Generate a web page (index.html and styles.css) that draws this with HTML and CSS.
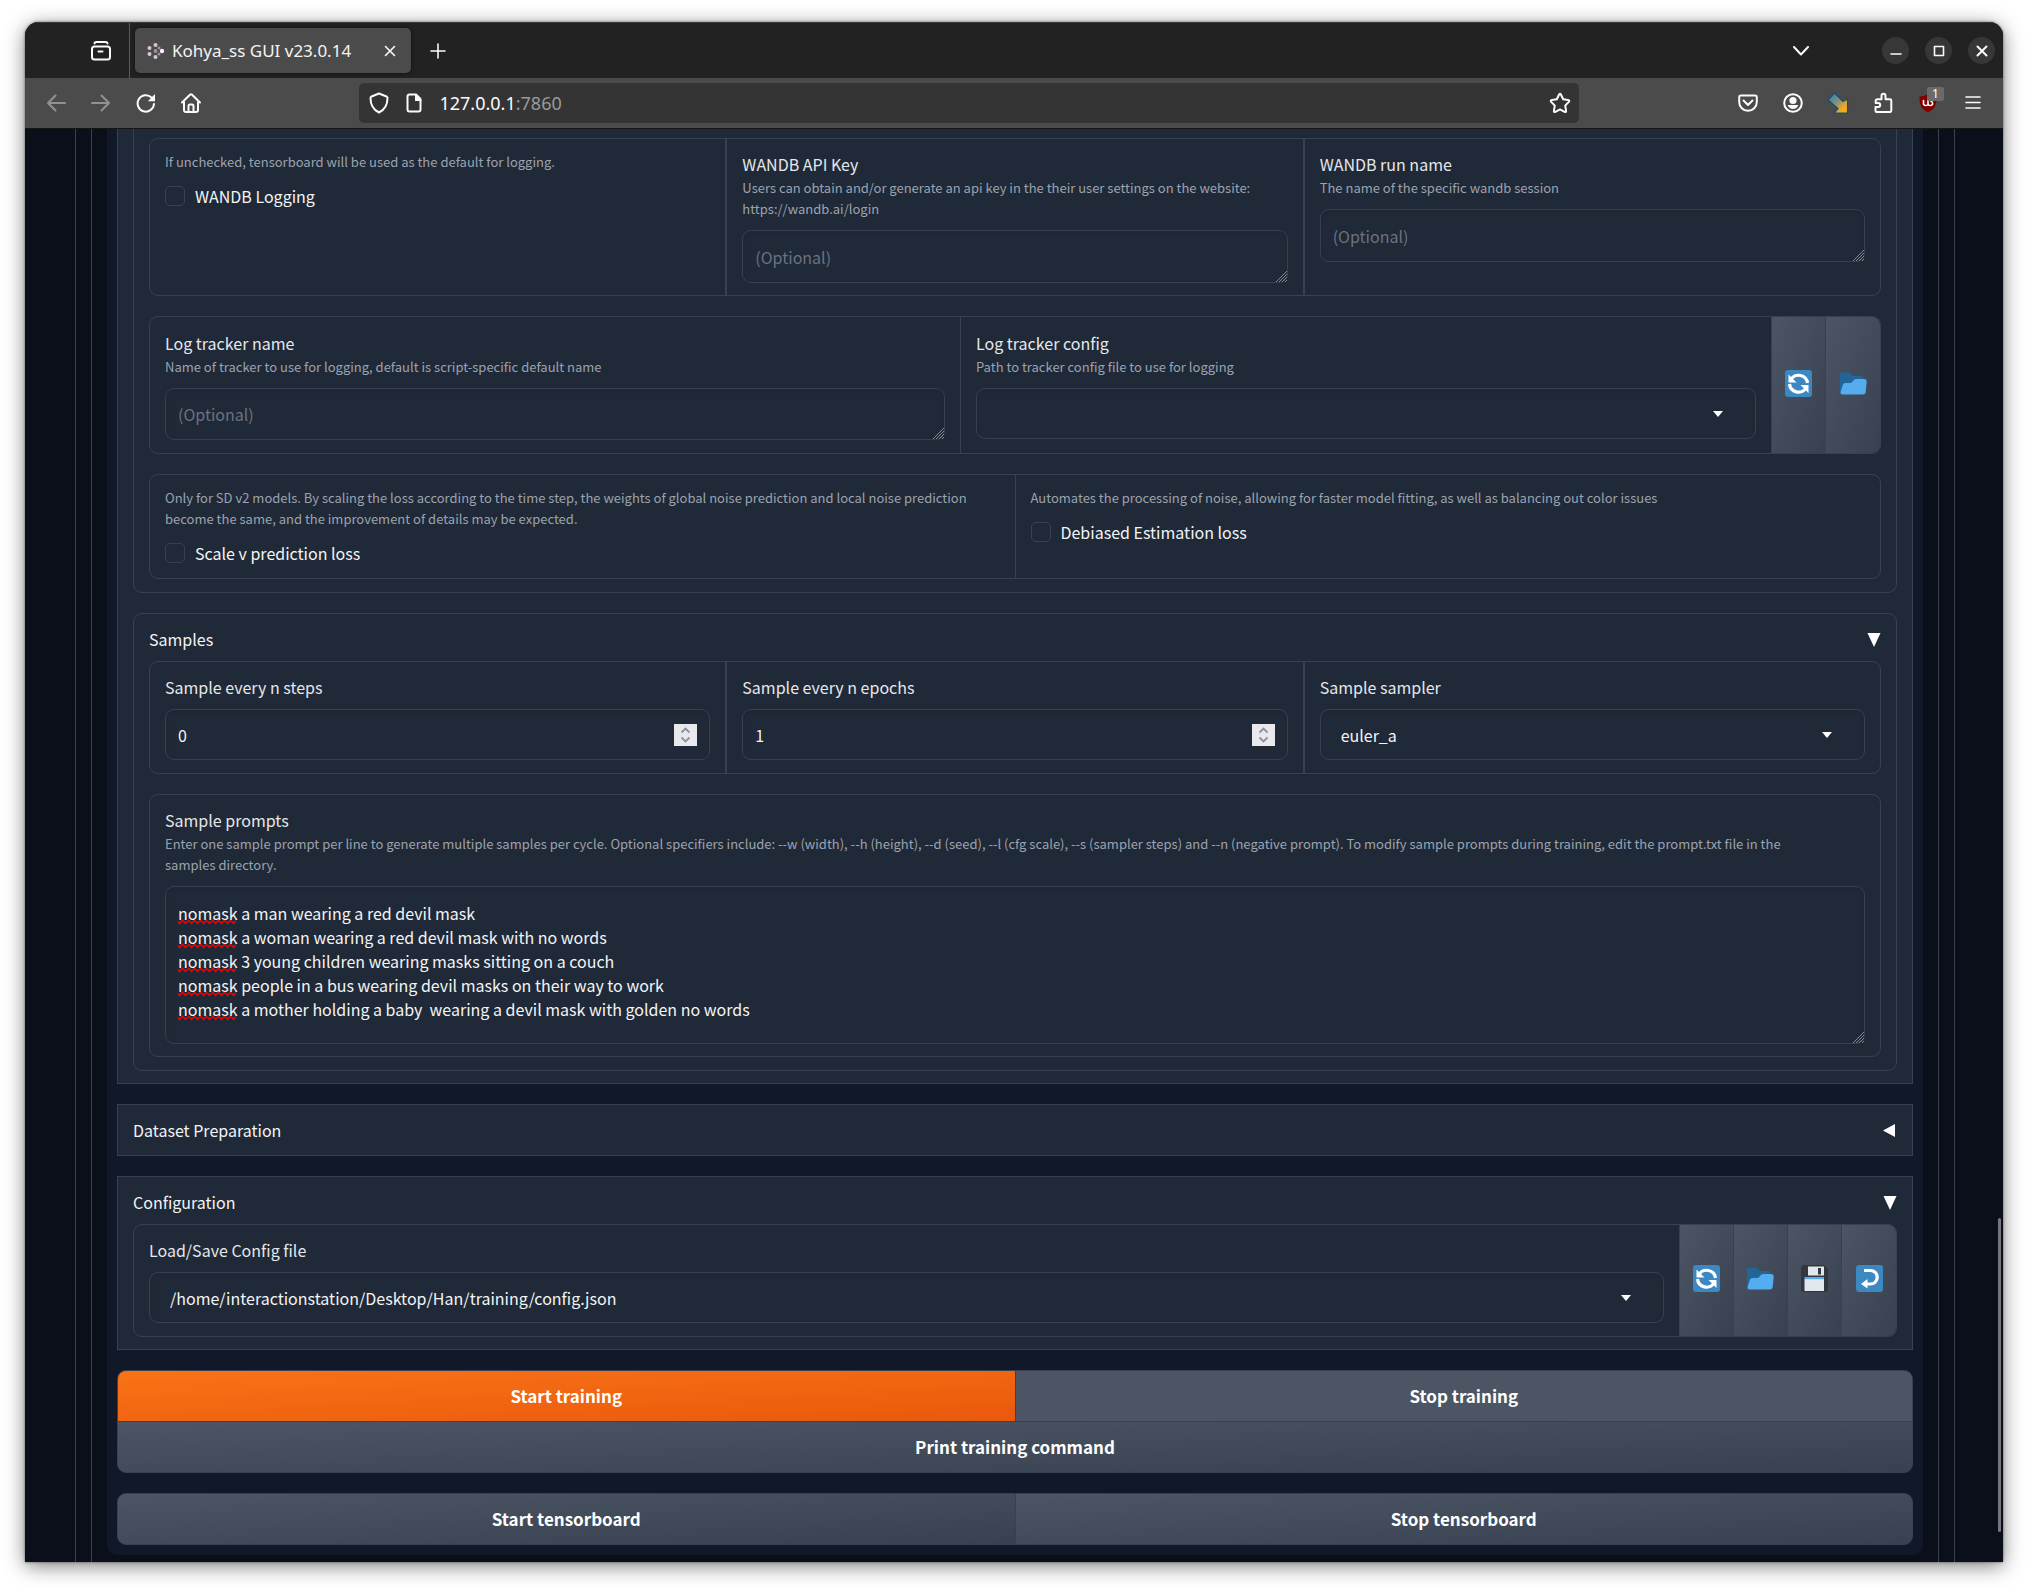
FILE: index.html
```html
<!DOCTYPE html>
<html lang="en">
<head>
<meta charset="utf-8">
<title>Kohya_ss GUI v23.0.14</title>
<link rel="stylesheet" href="styles.css">
</head>
<body>
<svg class="sprite" aria-hidden="true">
  <symbol id="i-refresh" viewBox="0 0 27 27">
    <rect width="27" height="27" rx="3" fill="#3b88c3"/>
    <path d="M6 9.5A9 9 0 0 1 22.5 13M21 18A9 9 0 0 1 4.5 14" fill="none" stroke="#fff" stroke-width="3.2"/>
    <path d="M3.5 4.5v8h8zM23.500 23v-8h-8z" fill="#fff"/>
  </symbol>
  <symbol id="i-folder" viewBox="0 0 27 27">
    <path d="M0 5.500a3 3 0 0 1 3-3h5q2 0 3.500 2l1 1.500h9q2 0 2 3v12H0z" fill="#226699"/>
    <path d="M2.500 16q.5-3 3-3H10q2 0 3-2t3.500-2H24q3 0 2.700 3l-1 10q-.3 2.500-3 2.500H3q-3 0-2.500-2.500z" fill="#55acee"/>
  </symbol>
  <symbol id="i-save" viewBox="0 0 27 27">
    <path d="M3 0h20l4 4v20a3 3 0 0 1-3 3H3a3 3 0 0 1-3-3V3a3 3 0 0 1 3-3z" fill="#31373d"/>
    <path d="M7 1.500h16v9H7zM3.500 14h19.500v12H3.500z" fill="#e1e8ed"/>
    <path d="M17 3h3v6.500h-3z" fill="#31373d"/>
    <path d="M3.500 12h19.500v2.200H3.500z" fill="#55acee"/>
  </symbol>
  <symbol id="i-return" viewBox="0 0 27 27">
    <rect width="27" height="27" rx="3" fill="#3b88c3"/>
    <path d="M8 5.500h6.500a6.500 6.500 0 0 1 0 13.500H11" fill="none" stroke="#fff" stroke-width="3.2"/>
    <path d="M11.500 14v9.500L5 19z" fill="#fff"/>
  </symbol>
  <symbol id="i-open" viewBox="0 0 14 16"><path d="M.5 2h13L7 16z" fill="#fff"/></symbol>
  <symbol id="i-closed" viewBox="0 0 14 16"><path d="M12 2v13L0 8.500z" fill="#fff"/></symbol>
</svg>

<div class="window">
  <header class="tabbar">
    <button class="tab-view" aria-label="View recent browsing">
      <svg width="22" height="22" viewBox="0 0 22 22"><rect x="2" y="6.500" width="18" height="13" rx="2.500"/><path d="M4.500 3.500Q4.500 2 6.500 2h9q2 0 2 1.500M8.500 11.500h4"/></svg>
    </button>
    <div class="tab">
      <svg class="favicon" width="18" height="16" viewBox="0 0 18 16" aria-hidden="true"><g fill="#d9c3d9"><circle cx="2.500" cy="5" r="2"/><circle cx="2.500" cy="11" r="2"/><circle cx="8.500" cy="2" r="2"/><circle cx="8.500" cy="8" r="1.900" opacity=".6"/><circle cx="8.500" cy="14" r="2"/><circle cx="12" cy="5" r="1.500" opacity=".6"/><circle cx="12" cy="11" r="1.500" opacity=".6"/></g><circle cx="15" cy="8" r="2.200" fill="#ffe9ff"/></svg>
      <span class="tab-title">Kohya_ss GUI v23.0.14</span>
      <button class="tab-close" aria-label="Close tab"><svg width="12" height="12" viewBox="0 0 12 12"><path class="thin" d="M1.500 1.500l9 9M10.500 1.500l-9 9"/></svg></button>
    </div>
    <button class="new-tab" aria-label="New tab"><svg width="16" height="16" viewBox="0 0 16 16"><path class="thin" d="M8 1v14M1 8h14"/></svg></button>
    <button class="all-tabs" aria-label="List all tabs"><svg width="16" height="10" viewBox="0 0 16 10"><path d="M1 1l7 7.500L15 1"/></svg></button>
    <div class="controls">
      <button aria-label="Minimize"><svg width="12" height="12" viewBox="0 0 12 12"><path class="thin" d="M1 9h10"/></svg></button>
      <button aria-label="Maximize"><svg width="12" height="12" viewBox="0 0 12 12"><rect class="thin" x="1.500" y="1.500" width="9" height="9"/></svg></button>
      <button aria-label="Close"><svg width="12" height="12" viewBox="0 0 12 12"><path d="M1.500 1.500l9 9M10.500 1.500l-9 9"/></svg></button>
    </div>
  </header>

  <nav class="toolbar">
    <button disabled aria-label="Back"><svg width="20" height="20" viewBox="0 0 20 20"><path d="M19 10H2M9.500 2.500L2 10l7.500 7.500"/></svg></button>
    <button disabled aria-label="Forward"><svg width="20" height="20" viewBox="0 0 20 20"><path d="M1 10h17M10.500 2.500L18 10l-7.500 7.500"/></svg></button>
    <button aria-label="Reload"><svg width="20" height="20" viewBox="0 0 20 20"><path d="M18 11a8.200 8.200 0 1 1-2.500-6.500"/><path class="fill" d="M19 1v7.200h-7.200z"/></svg></button>
    <button aria-label="Home"><svg width="20" height="20" viewBox="0 0 20 20"><path d="M1 9.500l8.200-8q.8-.6 1.600 0l8.200 8M3 9v8q0 2 2 2h10q2 0 2-2V9M7.500 19v-6q0-1.500 1.500-1.500h2q1.500 0 1.500 1.500v6"/></svg></button>
    <div class="spring"></div>
    <div class="urlbar">
      <svg width="20" height="22" viewBox="0 0 20 22" aria-hidden="true"><path d="M10 1.500l7.500 3q1 .4 1 1.500 0 10.500-8.500 14.500Q1.500 16.500 1.500 6q0-1.100 1-1.500z"/></svg>
      <svg width="20" height="20" viewBox="0 0 20 20" aria-hidden="true"><path d="M12 1.500H5.500q-2 0-2 2v13q0 2 2 2h9q2 0 2-2V6z"/><path class="fill" d="M11 1l7 7h-7z"/></svg>
      <span class="url"><span class="host">127.0.0.1</span>:7860</span>
      <button class="star" aria-label="Bookmark this page"><svg width="22" height="22" viewBox="0 0 22 22"><path d="M10.100 2.500q.9-1.500 1.800 0l2.300 4.800 5 .8q1.800.4.600 1.800l-3.600 3.700.9 5.200q.1 1.700-1.500 1.100L11 17.400l-4.600 2.500q-1.600.6-1.500-1.100l.9-5.200-3.600-3.700q-1.200-1.400.6-1.800l5-.8z"/></svg></button>
    </div>
    <div class="spring"></div>
    <button aria-label="Save to Pocket"><svg width="20" height="20" viewBox="0 0 20 20"><path d="M3 2.500h14q1.800 0 1.800 1.800V9a8.800 8.800 0 0 1-17.600 0V4.300Q1.200 2.500 3 2.500zM5.500 7.500L10 12l4.500-4.500"/></svg></button>
    <button aria-label="Account"><svg width="20" height="20" viewBox="0 0 20 20"><circle cx="10" cy="10" r="8.800"/><circle class="fill" cx="10" cy="7.500" r="3.600"/><path class="fill" d="M4.600 12h10.800q-1.500 4-5.400 4t-5.400-4z"/></svg></button>
    <button aria-label="Downloader"><svg width="22" height="22" viewBox="0 0 22 22"><defs><linearGradient id="arrow" x1="0" y1="0" x2="1" y2="1"><stop offset="0" stop-color="#2b7fae"/><stop offset=".45" stop-color="#7d9083"/><stop offset=".75" stop-color="#f5a623"/><stop offset="1" stop-color="#ffb000"/></linearGradient></defs><path class="arrow" d="M7.500 1l8.500 8.500L20.500 7v14H7l4-4.500L1 8z" fill="url(#arrow)"/></svg></button>
    <button aria-label="Extensions"><svg width="20" height="22" viewBox="0 0 20 22"><path d="M3.500 20h13q1.800 0 1.800-1.800V8.500q0-1.300-1.300-1.300h-4.500V4q0-2.300-2-2.300t-2 2.300v3.200H4.500q-1.800 0-1.800 1.800v2h2.500q2 0 2 2t-2 2H2.500V18q0 2 1 2z"/></svg></button>
    <button class="ublock" aria-label="uBlock Origin"><svg width="20" height="20" viewBox="0 0 20 20"><path class="shield" d="M10 1q4 2.500 8.500 2.500 1 12-8.500 16Q.5 15.500 1.500 3.500 6 3.500 10 1z"/><path class="thin" d="M5.500 7.500v3q0 2 2.300 2T10 10.500v-3 3q0 2 2.300 2t2.300-2-2-2.800"/></svg><span class="badge">1</span></button>
    <button aria-label="Menu"><svg width="18" height="16" viewBox="0 0 18 16"><path class="thin" d="M2 2h14M2 7.500h14M2 13h14"/></svg></button>
  </nav>

  <div class="viewport">
    <div class="tab-pane">
      <div class="tab-pane">
        <main class="panel">

          <section class="block block-cut">
            <section class="accordion accordion-cut">
              <div class="row thirds">
                <div class="cell">
                  <p class="info">If unchecked, tensorboard will be used as the default for logging.</p>
                  <label class="check"><input type="checkbox">WANDB Logging</label>
                </div>
                <div class="cell">
                  <label for="wandb-key">WANDB API Key</label>
                  <p class="info">Users can obtain and/or generate an api key in the their user settings on the website: https://wandb.ai/login</p>
                  <textarea id="wandb-key" class="field" rows="1" placeholder="(Optional)"></textarea>
                </div>
                <div class="cell">
                  <label for="wandb-run">WANDB run name</label>
                  <p class="info">The name of the specific wandb session</p>
                  <textarea id="wandb-run" class="field" rows="1" placeholder="(Optional)"></textarea>
                </div>
              </div>

              <div class="row tracker">
                <div class="cell">
                  <label for="log-name">Log tracker name</label>
                  <p class="info">Name of tracker to use for logging, default is script-specific default name</p>
                  <textarea id="log-name" class="field" rows="1" placeholder="(Optional)"></textarea>
                </div>
                <div class="cell">
                  <label for="log-config">Log tracker config</label>
                  <p class="info">Path to tracker config file to use for logging</p>
                  <select id="log-config" class="field"><option></option></select>
                </div>
                <button class="tool" aria-label="Refresh"><svg class="emoji"><use href="#i-refresh"/></svg></button>
                <button class="tool" aria-label="Open"><svg class="emoji"><use href="#i-folder"/></svg></button>
              </div>

              <div class="row halves">
                <div class="cell">
                  <p class="info">Only for SD v2 models. By scaling the loss according to the time step, the weights of global noise prediction and local noise prediction become the same, and the improvement of details may be expected.</p>
                  <label class="check"><input type="checkbox">Scale v prediction loss</label>
                </div>
                <div class="cell">
                  <p class="info">Automates the processing of noise, allowing for faster model fitting, as well as balancing out color issues</p>
                  <label class="check"><input type="checkbox">Debiased Estimation loss</label>
                </div>
              </div>
            </section>

            <section class="accordion">
              <button class="accordion-head"><span>Samples</span><svg class="mark"><use href="#i-open"/></svg></button>
              <div class="row thirds">
                <div class="cell">
                  <label for="n-steps">Sample every n steps</label>
                  <input id="n-steps" class="field" type="number" value="0">
                </div>
                <div class="cell">
                  <label for="n-epochs">Sample every n epochs</label>
                  <input id="n-epochs" class="field" type="number" value="1">
                </div>
                <div class="cell">
                  <label for="sampler">Sample sampler</label>
                  <select id="sampler" class="field"><option>euler_a</option></select>
                </div>
              </div>
              <div class="row">
                <div class="cell">
                  <label for="prompts">Sample prompts</label>
                  <p class="info info-long">Enter one sample prompt per line to generate multiple samples per cycle. Optional specifiers include: --w (width), --h (height), --d (seed), --l (cfg scale), --s (sampler steps) and --n (negative prompt). To modify sample prompts during training, edit the prompt.txt file in the samples directory.</p>
                  <textarea id="prompts" class="field prompts" rows="5" spellcheck="false">nomask a man wearing a red devil mask
nomask a woman wearing a red devil mask with no words
nomask 3 young children wearing masks sitting on a couch
nomask people in a bus wearing devil masks on their way to work
nomask a mother holding a baby  wearing a devil mask with golden no words</textarea>
                </div>
              </div>
            </section>
          </section>

          <section class="block">
            <button class="accordion-head shut"><span>Dataset Preparation</span><svg class="mark"><use href="#i-closed"/></svg></button>
          </section>

          <section class="block">
            <button class="accordion-head"><span>Configuration</span><svg class="mark"><use href="#i-open"/></svg></button>
            <div class="row">
              <div class="cell">
                <label for="config">Load/Save Config file</label>
                <select id="config" class="field"><option>/home/interactionstation/Desktop/Han/training/config.json</option></select>
              </div>
              <button class="tool" aria-label="Refresh"><svg class="emoji"><use href="#i-refresh"/></svg></button>
              <button class="tool" aria-label="Open"><svg class="emoji"><use href="#i-folder"/></svg></button>
              <button class="tool" aria-label="Save"><svg class="emoji"><use href="#i-save"/></svg></button>
              <button class="tool" aria-label="Load"><svg class="emoji"><use href="#i-return"/></svg></button>
            </div>
          </section>

          <div class="actions">
            <button class="primary">Start training</button>
            <button class="stop">Stop training</button>
            <button class="wide">Print training command</button>
          </div>
          <div class="actions">
            <button>Start tensorboard</button>
            <button>Stop tensorboard</button>
          </div>
        </main>
      </div>
    </div>
    <div class="scroll-thumb"></div>
  </div>
</div>
</body>
</html>
```

FILE: styles.css
```css
:root {
  --line: #374151;
  --fill: #1f2937;
  --text: #f3f4f6;
  --muted: #9ca3af;
  --body-font: "Noto Sans CJK SC", "Open Sans", sans-serif;
  --chrome-font: "Noto Sans", sans-serif;
}

* { box-sizing: border-box; }

body {
  margin: 0;
  padding: 22px 26px 28px 25px;
  background: #fff;
  color: var(--text);
  font: 16px/24px var(--body-font);
}

button, input, textarea, select { font: inherit; color: inherit; }
button { padding: 0; border: 0; background: none; display: flex; align-items: center; justify-content: center; }
p { margin: 0; }
.sprite { display: none; }

.window {
  border-radius: 14px 14px 0 0;
  overflow: hidden;
  background: #0b0f19;
  box-shadow: 0 0 3px rgba(0, 0, 0, .5), 0 4px 20px rgba(0, 0, 0, .5);
}

/* Browser chrome */
.tabbar svg, .toolbar svg { fill: none; stroke: #fbfbfe; stroke-width: 2; stroke-linecap: round; stroke-linejoin: round; }
.tabbar .favicon { stroke: none; }
.tabbar .thin, .toolbar .thin { stroke-width: 1.6; }
.toolbar svg .fill { fill: #fbfbfe; stroke: none; }
.toolbar .arrow { stroke: #17506f; stroke-width: 1.2; }
.toolbar .shield { fill: #800000; stroke: none; }

.tabbar {
  display: flex;
  align-items: center;
  height: 56px;
  padding-right: 8px;
  border-top: 1px solid #3a3a3a;
  background: #222;
  font-family: var(--chrome-font);
}
.tab-view { width: 105px; height: 56px; padding-left: 47px; border-right: 1px solid #5a5a5a; }
.tab {
  display: flex;
  align-items: center;
  gap: 7px;
  width: 276px;
  height: 45px;
  margin-left: 5px;
  padding: 0 14px 0 12px;
  border-radius: 5px;
  background: #4b4b4b;
  box-shadow: 0 0 4px rgba(0, 0, 0, .5);
}
.tab-title { flex: 1; font-size: 17px; white-space: nowrap; }
.tab-close { width: 14px; height: 24px; }
.new-tab { width: 45px; height: 45px; margin-left: 4px; }
.all-tabs { width: 45px; height: 45px; margin: 0 59px 0 auto; }
.controls { display: flex; gap: 16px; }
.controls button { width: 27px; height: 27px; border-radius: 50%; background: #373737; }

.toolbar {
  display: flex;
  align-items: center;
  height: 51px;
  padding: 0 8px;
  border-bottom: 1px solid #161616;
  background: #4b4b4b;
  font-family: var(--chrome-font);
}
.toolbar > button { flex: none; width: 45px; height: 40px; }
.toolbar button:disabled { opacity: .4; }
.spring { flex: 1; }
.urlbar {
  flex: 8.2;
  display: flex;
  align-items: center;
  gap: 15px;
  height: 40px;
  padding: 0 8px 0 10px;
  border-radius: 5px;
  background: #343434;
}
.url { flex: 1; font-size: 18px; color: #9a9a9a; }
.host { color: #fbfbfe; }
.ublock { position: relative; }
.badge {
  position: absolute;
  top: 4px;
  right: 6px;
  width: 17px;
  height: 14px;
  border-radius: 2px;
  background: #6a6a6a;
  color: #fff;
  font-size: 12px;
  line-height: 14px;
}

/* Page */
.viewport { position: relative; padding: 0 48px 0 50px; }
.tab-pane { padding: 0 15px; border: solid var(--line); border-width: 0 1px; }
.tab-pane .tab-pane { padding-bottom: 7px; }
.panel {
  display: flex;
  flex-direction: column;
  gap: 20px;
  padding: 0 10px 10px;
  border-radius: 0 0 10px 10px;
  background: #111827;
}
.scroll-thumb {
  position: absolute;
  right: 2px;
  bottom: 30px;
  width: 3px;
  height: 314px;
  border-radius: 2px;
  background: #76767c;
}

.block { padding: 13px 15px 12px; border: 1px solid var(--line); background: var(--fill); }
.block-cut { display: flex; flex-direction: column; gap: 20px; padding-top: 0; border-top: 0; }
.accordion {
  display: flex;
  flex-direction: column;
  gap: 20px;
  padding: 13px 15px;
  border: 1px solid var(--line);
  border-radius: 9px;
}
.accordion-cut { padding-top: 9px; border-top: 0; border-radius: 0 0 9px 9px; }
.accordion-head { width: 100%; justify-content: space-between; margin-bottom: 10px; line-height: 24px; }
.accordion .accordion-head { margin-bottom: -10px; }
.accordion-head.shut { margin-bottom: 1px; }
.mark { width: 14px; height: 16px; }

.row {
  display: flex;
  border: 1px solid var(--line);
  border-radius: 9px;
  overflow: hidden;
}
.cell { flex: 1 1 0; min-width: 0; padding: 12px 15px; }
.cell + .cell { border-left: 1px solid var(--line); }
.thirds .cell + .cell { border-left-width: 2px; }
.tracker .cell { padding-block: 13px; }
.cell label { display: block; padding-top: 1px; color: #e5e7eb; }
.info { margin-top: 1px; color: var(--muted); font-size: 13px; line-height: 21px; }
.info:first-child { margin-top: 0; }
.info-long { padding-right: 32px; }
.cell .check { display: flex; align-items: center; gap: 10px; height: 25px; margin: 11px 0 1px; padding-top: 0; color: var(--text); }
.check input {
  appearance: none;
  width: 20px;
  height: 20px;
  margin: 0;
  border: 1px solid var(--line);
  border-radius: 5px;
  background: var(--fill);
}

.field {
  display: block;
  width: 100%;
  height: 51px;
  margin-top: 10px;
  padding: 0 12px;
  border: 1px solid var(--line);
  border-radius: 9px;
  background: var(--fill);
  box-shadow: inset 0 2px 4px rgba(0, 0, 0, .06);
  outline: 0;
}
.cell:has(input[type="number"]), .cell:has(label + select) { padding-bottom: 13px; }
textarea.field { height: 53px; padding: 14px 12px; resize: vertical; overflow: hidden; }
.tracker textarea.field { height: 52px; padding-top: 13px; }
.info + .field { margin-top: 11px; }
textarea::placeholder { color: #6b7280; opacity: 1; }
textarea::-webkit-resizer {
  background: url("data:image/svg+xml,%3Csvg xmlns='http://www.w3.org/2000/svg' width='12' height='12'%3E%3Cpath d='M1 12L12 1M4 12l8-8M7 12l5-5M10 12l2-2' stroke='%23808892'/%3E%3C/svg%3E") right bottom no-repeat;
}
textarea.prompts {
  height: 158px;
  background-image: url("data:image/svg+xml,%3Csvg xmlns='http://www.w3.org/2000/svg' width='58' height='120'%3E%3Cdefs%3E%3Cpattern id='w' width='6' height='24' patternUnits='userSpaceOnUse'%3E%3Cpath d='M0 20.500L1.500 22.500 4.500 19.500 6 21' fill='none' stroke='%23f00' stroke-width='1.300'/%3E%3C/pattern%3E%3C/defs%3E%3Crect width='58' height='120' fill='url(%23w)'/%3E%3C/svg%3E");
  background-position: 12px 14px;
  background-repeat: no-repeat;
}
select.field {
  appearance: none;
  padding: 0 60px 0 20px;
  background-image: url("data:image/svg+xml,%3Csvg xmlns='http://www.w3.org/2000/svg' width='10' height='6'%3E%3Cpath d='M0 0h10L5 6z' fill='%23fff'/%3E%3C/svg%3E");
  background-position: right 32px center;
  background-repeat: no-repeat;
}
input[type="number"] {
  appearance: textfield;
  padding-right: 40px;
  background-image: url("data:image/svg+xml,%3Csvg xmlns='http://www.w3.org/2000/svg' width='23' height='22'%3E%3Cpath fill='%23e9e9ed' d='M0 0h23v22H0z'/%3E%3Cpath d='M7.500 8.500l4-4 4 4M7.500 13.500l4 4 4-4' fill='none' stroke='%238f8f9d' stroke-width='1.800'/%3E%3C/svg%3E");
  background-position: right 12px center;
  background-repeat: no-repeat;
}
input[type="number"]::-webkit-inner-spin-button { appearance: none; margin: 0; }

.tool {
  flex: none;
  width: 54px;
  padding-bottom: 4px;
  border-left: 1px solid var(--line);
  background: linear-gradient(to bottom right, #4b5563, #374151) padding-box;
}
.tool:last-child { width: 55px; }
.emoji { width: 27px; height: 27px; }

.actions {
  display: grid;
  grid-template-columns: 1fr 1fr;
  gap: 1px;
  border: 1px solid var(--line);
  border-radius: 9px;
  overflow: hidden;
  background: var(--line);
}
.actions button {
  height: 50px;
  background: linear-gradient(to bottom right, #4b5563, #374151);
  color: #fff;
  font-size: 17px;
  font-weight: 700;
}
.actions .primary { background: linear-gradient(to bottom right, #f97316, #ea580c); }
.actions .stop { background: #4b5563; }
.actions .wide { grid-column: span 2; }
```
